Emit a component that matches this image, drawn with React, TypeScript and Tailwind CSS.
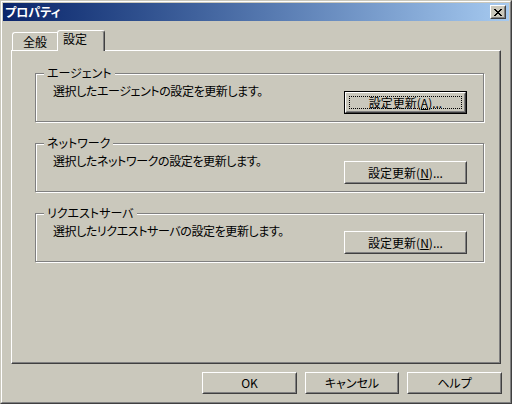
import type { ReactNode } from 'react'

const FONT = "font-['Noto_Sans_CJK_JP','Noto_Sans_CJK_SC',sans-serif] [font-feature-settings:'palt'] text-[12px] text-black"

function Btn({ children, className, isDefault }: { children: ReactNode; className: string; isDefault?: boolean }) {
  const face = (
    <div className="flex h-full w-full border border-t-white border-l-white border-b-[#404040] border-r-[#404040]">
      <div className="flex flex-1 border border-t-[#cac8bc] border-l-[#cac8bc] border-b-[#808080] border-r-[#808080] p-[2px]">
        <div className={isDefault ? 'flex flex-1 items-center justify-center border border-dotted border-black leading-none' : 'flex flex-1 items-center justify-center border border-transparent leading-none'}>
          {children}
        </div>
      </div>
    </div>
  )
  return <div className={(isDefault ? 'border border-black ' : '') + className}>{face}</div>
}

function Group({ title, text, children }: { title: string; text: string; children: ReactNode }) {
  return (
    <div className="relative flex h-[49px] items-start justify-between border border-[#808080] pl-[17px] pr-[16px] shadow-[1px_1px_0_#fff,inset_1px_1px_0_#fff]">
      <span className="absolute -top-[8px] left-[8px] bg-[#cac8bc] px-[3px] leading-[14px]">{title}</span>
      <span className="mt-[10px] leading-[14px] tracking-[-0.4px]">{text}</span>
      <div className="mt-[17px]">{children}</div>
    </div>
  )
}

export default function App() {
  return (
    <div className={FONT + ' h-[404px] w-[512px] bg-[#cac8bc]'}>
      <div className="h-full w-full border border-t-[#cac8bc] border-l-[#cac8bc] border-b-[#404040] border-r-[#404040]">
        <div className="flex h-full w-full flex-col border border-t-white border-l-white border-b-[#808080] border-r-[#808080] p-[1px]">
          {/* title bar */}
          <div className="flex h-[18px] items-start justify-between bg-gradient-to-r from-[#0a246a] to-[#a6caf0]">
            <span className="ml-[2px] mt-[2px] text-[12px] font-bold leading-[14px] text-white">プロパティ</span>
            <div className="mr-[3px] mt-[2px] flex h-[14px] w-[16px] border border-t-white border-l-white border-b-[#404040] border-r-[#404040] bg-[#cac8bc]">
              <div className="flex flex-1 items-center justify-center border border-t-[#cac8bc] border-l-[#cac8bc] border-b-[#808080] border-r-[#808080]">
                <svg width="8" height="7" viewBox="0 0 8 7" shapeRendering="crispEdges">
                  <path d="M0 0h2v1H0zM6 0h2v1H6zM1 1h2v1H1zM5 1h2v1H5zM2 2h4v1H2zM3 3h2v1H3zM2 4h4v1H2zM1 5h2v1H1zM5 5h2v1H5zM0 6h2v1H0zM6 6h2v1H6z" fill="#000" />
                </svg>
              </div>
            </div>
          </div>

          <div className="flex flex-1 flex-col px-[8px] pt-[9px]">
            {/* tabs */}
            <div className="flex h-[20px] items-end pl-[1px]">
              <div className="flex h-[18px] w-[45px] items-start justify-center rounded-tl-[3px] border-l border-t border-l-white border-t-white pt-[2px] leading-[14px]">
                全般
              </div>
              <div className="relative z-10 -mb-[1px] flex h-[21px] w-[48px] items-start justify-start rounded-tl-[3px] rounded-tr-[3px] border-l border-r border-t border-l-white border-r-[#404040] border-t-white bg-[#cac8bc] pl-[5px] pt-[1px] leading-[14px] shadow-[inset_-1px_0_0_#808080]">
                設定
              </div>
            </div>

            {/* panel */}
            <div className="flex h-[314px] flex-col gap-[21px] border border-t-white border-l-white border-b-[#404040] border-r-[#404040] pl-[23px] pr-[16px] pt-[22px] shadow-[inset_-1px_-1px_0_#808080]">
              <Group title="エージェント" text="選択したエージェントの設定を更新します。">
                <Btn isDefault className="h-[23px] w-[123px]">
                  <span>設定更新(<span className="underline">A</span>)...</span>
                </Btn>
              </Group>
              <Group title="ネットワーク" text="選択したネットワークの設定を更新します。">
                <Btn className="h-[23px] w-[123px]">
                  <span>設定更新(<span className="underline">N</span>)...</span>
                </Btn>
              </Group>
              <Group title="リクエストサーバ" text="選択したリクエストサーバの設定を更新します。">
                <Btn className="h-[23px] w-[123px]">
                  <span>設定更新(<span className="underline">N</span>)...</span>
                </Btn>
              </Group>
            </div>

            {/* dialog buttons */}
            <div className="-mr-[1px] mt-[8px] flex justify-end gap-[8px]">
              <Btn className="h-[22px] w-[95px]">OK</Btn>
              <Btn className="h-[22px] w-[94px]">キャンセル</Btn>
              <Btn className="h-[22px] w-[95px]">ヘルプ</Btn>
            </div>
          </div>
        </div>
      </div>
    </div>
  )
}
